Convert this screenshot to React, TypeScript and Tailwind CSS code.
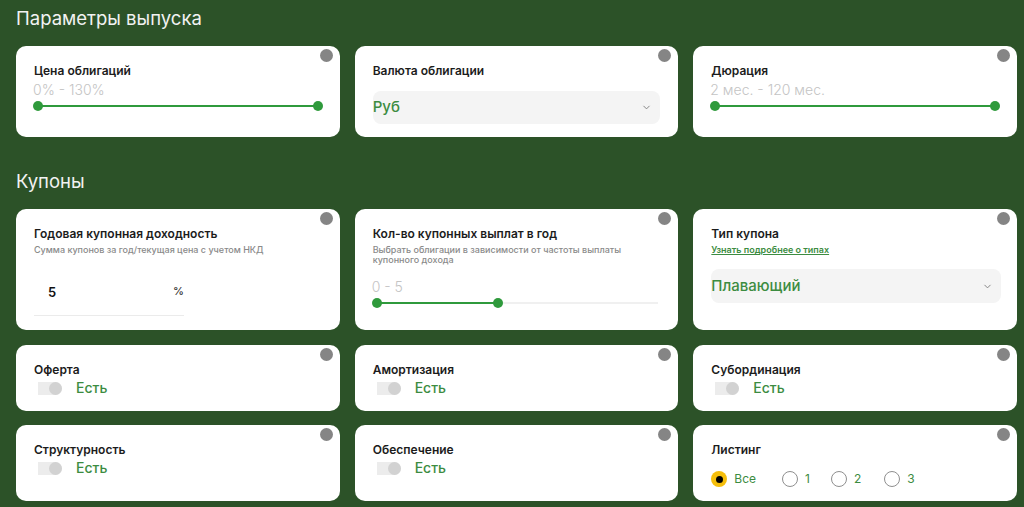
import { ChevronDown } from "lucide-react";
import type { ReactNode } from "react";

const FONT = { fontFamily: "Inter, 'Noto Sans', sans-serif" };

function Card({ children, className = "" }: { children: ReactNode; className?: string }) {
  return (
    <div className={`relative rounded-[10px] bg-white px-[18px] ${className}`}>
      <span className="absolute right-[7px] top-[3px] h-[13px] w-[13px] rounded-full bg-[#858585]" />
      {children}
    </div>
  );
}

function Label({ children }: { children: ReactNode }) {
  return <div className="text-[12px] font-semibold leading-4 text-[#1c1c1c]">{children}</div>;
}

function Hint({ children }: { children: ReactNode }) {
  return <div className="text-[9px] font-medium leading-[10px] text-[#8a8a8a]">{children}</div>;
}

function Range({ text, fill = 100 }: { text: string; fill?: number }) {
  return (
    <div>
      <div className="text-[14px] font-light leading-[18px] text-[#c4c4c4]">{text}</div>
      <div className="relative mt-[2px] h-[10px]">
        <div className="absolute left-[5px] right-[5px] top-[4px] h-[2px] bg-[#f0f0f0]" />
        <div
          className="absolute left-[5px] top-[4px] h-[2px] bg-[#2f9a3c]"
          style={{ width: `calc((100% - 10px) * ${fill / 100})` }}
        />
        <span className="absolute left-0 top-0 h-[10px] w-[10px] rounded-full bg-[#2f9a3c]" />
        <span
          className="absolute top-0 h-[10px] w-[10px] rounded-full bg-[#2f9a3c]"
          style={{ left: `calc((100% - 10px) * ${fill / 100})` }}
        />
      </div>
    </div>
  );
}

function Select({ value, big = false }: { value: string; big?: boolean }) {
  return (
    <div
      className={`flex items-center justify-between rounded-[8px] bg-[#f4f4f4] pr-[8px] ${
        big ? "h-[34px]" : "h-[33px]"
      }`}
    >
      <span className="text-[15px] font-medium text-[#3c8c41]">{value}</span>
      <ChevronDown className="h-[11px] w-[11px] text-[#7d7d7d]" strokeWidth={2} />
    </div>
  );
}

function Toggle() {
  return (
    <div className="flex h-[20px] items-center gap-[14px] pl-[4px]">
      <div className="relative h-[13px] w-[24px] rounded-l-[4px] rounded-r-full bg-[#ececec]">
        <span className="absolute right-0 top-0 h-[13px] w-[13px] rounded-full bg-[#d2d2d2]" />
      </div>
      <span className="text-[14px] font-medium leading-5 text-[#3c8c41]">Есть</span>
    </div>
  );
}

function ToggleCard({ title, tall = false }: { title: string; tall?: boolean }) {
  return (
    <Card className={`pt-[17px] ${tall ? "h-[76px]" : "h-[66px]"}`}>
      <Label>{title}</Label>
      <Toggle />
    </Card>
  );
}

function Radio({ label, on = false }: { label: string; on?: boolean }) {
  return (
    <div className="flex items-center gap-[7px]">
      <span
        className={`grid h-[16px] w-[16px] place-items-center rounded-full ${
          on ? "bg-[#f5be0b]" : "border border-[#8f8f8f] bg-white"
        }`}
      >
        {on && <span className="h-[7px] w-[7px] rounded-full bg-black" />}
      </span>
      <span className="text-[12px] text-[#3c8c41]">{label}</span>
    </div>
  );
}

function Heading({ children }: { children: ReactNode }) {
  return <h2 className="mb-[14px] h-7 text-[18.5px] leading-7 text-[#f2f2f2]">{children}</h2>;
}

export default function App() {
  return (
    <div className="min-h-[507px] bg-[#2c5228] pl-4 pr-[7px] pt-[4px]" style={FONT}>
      <Heading>Параметры выпуска</Heading>
      <div className="grid grid-cols-3 gap-[15px]">
        <Card className="h-[91px] pt-[17px]">
          <Label>Цена облигаций</Label>
          <div className="-mx-[1px] mt-[2px]">
            <Range text="0% - 130%" />
          </div>
        </Card>
        <Card className="h-[91px] pt-[17px]">
          <Label>Валюта облигации</Label>
          <div className="mt-[12px]">
            <Select value="Руб" />
          </div>
        </Card>
        <Card className="h-[91px] pt-[17px]">
          <Label>Дюрация</Label>
          <div className="-mx-[1px] mt-[2px]">
            <Range text="2 мес. - 120 мес." />
          </div>
        </Card>
      </div>

      <div className="mt-[30px]">
        <Heading>Купоны</Heading>
      </div>
      <div className="grid grid-cols-3 gap-[15px]">
        <Card className="h-[121px] pt-[17px]">
          <Label>Годовая купонная доходность</Label>
          <div className="mt-[3px]">
            <Hint>Сумма купонов за год/текущая цена с учетом НКД</Hint>
          </div>
          <div className="mt-[21px] flex h-[40px] w-[150px] items-start justify-between border-b border-[#ebebeb] pl-[14px] pt-[7px]">
            <span className="text-[13px] font-semibold text-[#111]">5</span>
            <span className="text-[11px] font-medium text-[#333]">%</span>
          </div>
        </Card>
        <Card className="h-[121px] pt-[17px]">
          <Label>Кол-во купонных выплат в год</Label>
          <div className="mt-[3px] pr-[30px]">
            <Hint>Выбрать облигации в зависимости от частоты выплаты купонного дохода</Hint>
          </div>
          <div className="-ml-[1px] -mr-[3px] mt-[13px]">
            <Range text="0 - 5" fill={43} />
          </div>
        </Card>
        <Card className="h-[121px] pt-[17px]">
          <Label>Тип купона</Label>
          <div className="mt-[3px] text-[9px] font-semibold leading-[10px]">
            <a className="text-[#3c8c41] underline">Узнать подробнее о типах</a>
          </div>
          <div className="-mr-[2px] mt-[14px]">
            <Select value="Плавающий" big />
          </div>
        </Card>
      </div>

      <div className="mt-[15px] grid grid-cols-3 gap-x-[15px] gap-y-[14px]">
        <ToggleCard title="Оферта" />
        <ToggleCard title="Амортизация" />
        <ToggleCard title="Субординация" />
        <ToggleCard title="Структурность" tall />
        <ToggleCard title="Обеспечение" tall />
        <Card className="h-[76px] pt-[17px]">
          <Label>Листинг</Label>
          <div className="mt-[12px] flex items-center">
            <Radio label="Все" on />
            <div className="ml-[26px]">
              <Radio label="1" />
            </div>
            <div className="ml-[21px]">
              <Radio label="2" />
            </div>
            <div className="ml-[23px]">
              <Radio label="3" />
            </div>
          </div>
        </Card>
      </div>
    </div>
  );
}
